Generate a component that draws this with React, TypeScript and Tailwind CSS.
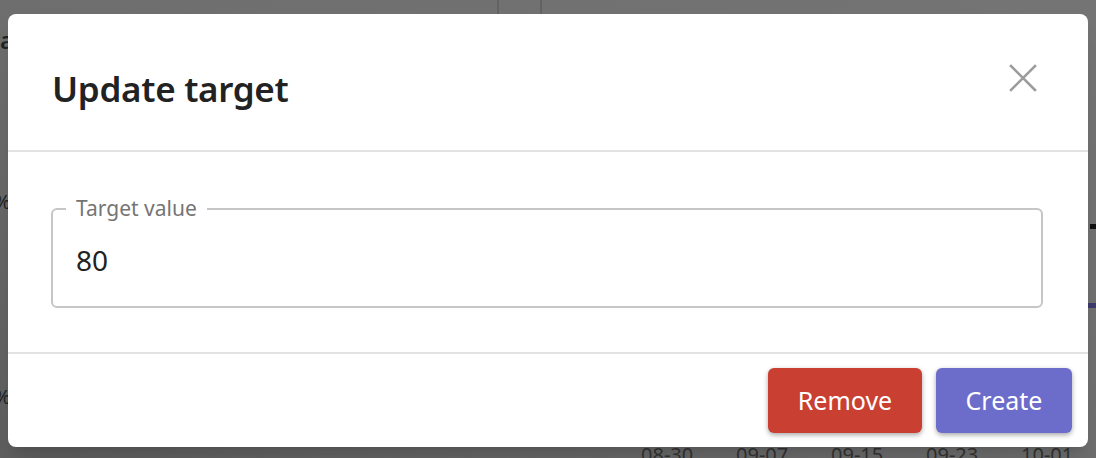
import { useState } from "react";

const font = { fontFamily: '"Noto Sans", "Open Sans", sans-serif' };

const chartLabels = ["08-30", "09-07", "09-15", "09-23", "10-01"];

// dimmed dashboard fragments visible around the modal
const Backdrop = () => (
  <div className="flex h-full w-full">
    <div className="flex w-[8px] flex-col overflow-visible text-[#222222]">
      <span className="mt-[26px] text-[24px] font-semibold leading-[28px]">a</span>
      <span className="-ml-[6px] mt-[136px] text-[20px] leading-[24px]">%</span>
      <span className="-ml-[6px] mt-[171px] text-[20px] leading-[24px]">%</span>
    </div>
    <div className="flex flex-1 flex-col">
      <div className="flex h-[14px] pl-[489px]">
        <div className="h-full w-[2px] bg-[#626262]" />
        <div className="ml-[41px] h-full w-[2px] bg-[#626262]" />
      </div>
      <div className="flex flex-1 flex-col items-end">
        <div className="mt-[210px] h-[5px] w-[6px] bg-[#111111]" />
        <div className="mt-[74px] h-[5px] w-[8px] bg-[#3c3a6c]" />
      </div>
      <div className="-mb-[9px] flex gap-[40px] pl-[633px] text-[20px] leading-[24px] text-[#333333]">
        {chartLabels.map((l) => (
          <span key={l} className="w-[55px]">{l}</span>
        ))}
      </div>
    </div>
  </div>
);

const TargetDialog = () => {
  const [value, setValue] = useState("80");

  return (
    <div
      className="absolute left-2 right-2 top-[14px] flex h-[433px] flex-col rounded-lg bg-white shadow-xl"
      style={font}
    >
      {/* header */}
      <div className="flex h-[138px] items-start justify-between border-b-2 border-[#e2e2e2] pl-[44px] pr-[51px]">
        <h2 className="pt-[57px] text-[35px] font-semibold leading-[35px] tracking-[-0.3px] text-[#222222]">
          Update target
        </h2>
        <button className="mt-[50px] flex h-[28px] w-[28px] items-center justify-center" title="Close">
          <svg width="28" height="28" viewBox="0 0 28 28">
            <path d="M2 2 L26 26 M26 2 L2 26" stroke="#9c9c9c" strokeWidth="2.6" strokeLinecap="square" />
          </svg>
        </button>
      </div>

      {/* body */}
      <div className="flex-1 border-b-2 border-[#e2e2e2] pl-[43px] pr-[45px] pt-[56px]">
        <div className="relative flex h-[100px] items-center rounded-[6px] border-2 border-[#c6c6c6] px-[23px] pt-[3px]">
          <label className="absolute -top-[14px] left-[13px] bg-white px-[10px] text-[21px] leading-[24px] text-[#757575]">
            Target value
          </label>
          <input
            value={value}
            onChange={(e) => setValue(e.target.value)}
            className="w-full bg-transparent text-[28px] text-[#222222] outline-none"
          />
        </div>
      </div>

      {/* footer */}
      <div className="flex h-[93px] items-center justify-end gap-[14px] pr-[16px]">
        <button className="h-[65px] w-[154px] rounded-[6px] bg-[#c94033] text-[25px] text-white shadow-[0_2px_5px_rgba(0,0,0,0.35)]">
          Remove
        </button>
        <button className="h-[65px] w-[136px] rounded-[6px] bg-[#6c6cca] text-[25px] text-white shadow-[0_2px_5px_rgba(0,0,0,0.35)]">
          Create
        </button>
      </div>
    </div>
  );
};

export default function App() {
  return (
    <div
      className="relative h-[458px] w-full overflow-hidden bg-gradient-to-tr from-[#5e5e5e] via-[#6e6e6e] to-[#747474]"
      style={font}
    >
      <Backdrop />
      <TargetDialog />
    </div>
  );
}
